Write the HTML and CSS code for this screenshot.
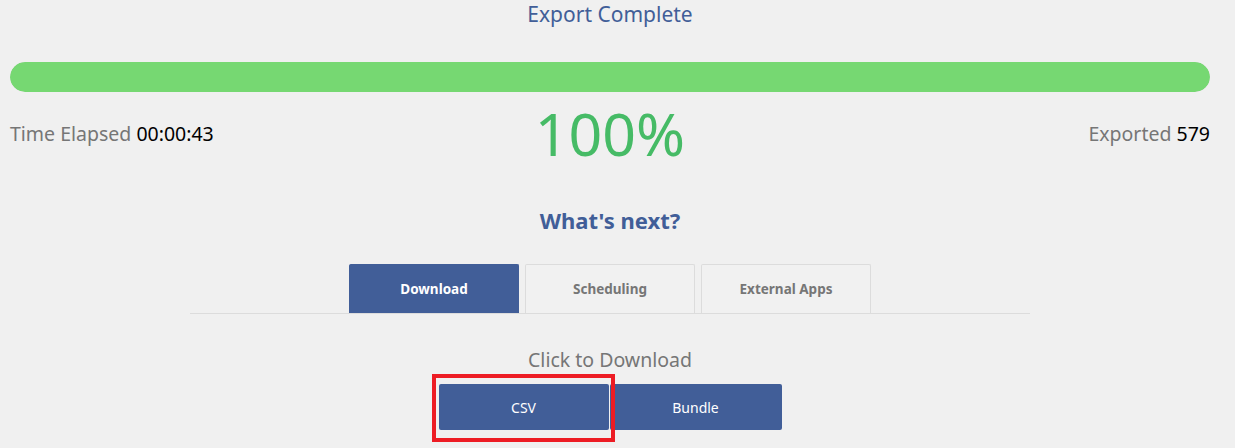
FILE: index.html
```html
<!DOCTYPE html>
<html lang="en">
<head>
  <meta charset="UTF-8" />
  <title>Export Complete</title>
  <link rel="stylesheet" href="styles.css">
</head>
<body>
  <div class="export">
    <h3 class="export-title">Export Complete</h3>
    <div class="progress"><div class="progress-fill" style="width:100%"></div></div>
    <div class="stats">
      <div class="stat"><span class="stat-label">Time Elapsed</span> <span class="stat-value">00:00:43</span></div>
      <div class="percent">100%</div>
      <div class="stat stat-right"><span class="stat-label">Exported</span> <span class="stat-value">579</span></div>
    </div>

    <h2 class="next-title">What's next?</h2>
    <div class="tabs">
      <button class="tab active">Download</button>
      <button class="tab">Scheduling</button>
      <button class="tab">External Apps</button>
    </div>

    <div class="download">
      <div class="download-title">Click to Download</div>
      <div class="download-buttons">
        <div class="highlight"><button class="dl-btn csv">CSV</button></div>
        <button class="dl-btn">Bundle</button>
      </div>
    </div>
  </div>
</body>
</html>
```

FILE: styles.css
```css
*, *::before, *::after { box-sizing: border-box; }
html, body { min-height: 100%; }
body {
  margin: 0;
  background: #f0f0f0;
  font-family: "Noto Sans", "Open Sans", sans-serif;
  color: #333;
}
.export {
  width: 1200px;
  margin-left: 10px;
  padding-bottom: 40px;
}
.export-title {
  margin: 0;
  height: 62px;
  text-align: center;
  font-size: 21px;
  font-weight: 400;
  color: #415e98;
  line-height: 28px;
}

/* progress */
.progress {
  height: 30px;
  border-radius: 15px;
  background: #e0e0e0;
  overflow: hidden;
}
.progress-fill {
  height: 100%;
  background: #76d872;
  border-radius: 15px;
}
.stats {
  display: flex;
  align-items: center;
  justify-content: space-between;
  height: 82px;
}
.stat {
  flex: 1;
  font-size: 19.5px;
}
.stat-right { text-align: right; }
.stat-label { color: #767676; }
.stat-value { color: #000; }
.percent {
  font-size: 59px;
  color: #46bb66;
  line-height: 1;
}

/* what's next */
.next-title {
  margin: 31px 0 0;
  text-align: center;
  font-size: 22px;
  font-weight: 700;
  color: #415e98;
  line-height: 30px;
}
.tabs {
  display: flex;
  justify-content: center;
  gap: 6px;
  width: 840px;
  margin: 29px auto 0;
  border-bottom: 1px solid #dcdcdc;
}
.tab {
  width: 170px;
  height: 49px;
  border: 1px solid #dcdcdc;
  border-bottom: none;
  border-radius: 2px 2px 0 0;
  background: #f1f1f1;
  color: #767676;
  font-family: inherit;
  font-size: 13.5px;
  font-weight: 700;
}
.tab.active {
  background: #415e98;
  border-color: #415e98;
  color: #fff;
}

/* download */
.download { text-align: center; }
.download-title {
  margin-top: 33px;
  font-size: 19.5px;
  color: #767676;
  line-height: 26px;
}
.download-buttons {
  display: flex;
  justify-content: center;
  gap: 1px;
  margin-top: 11px;
}
.dl-btn {
  width: 172px;
  height: 46px;
  border: none;
  border-radius: 2px;
  background: #415e98;
  color: #fff;
  font-family: inherit;
  font-size: 14px;
}
.highlight {
  position: relative;
  z-index: 1;
  display: flex;
}
.dl-btn.csv { width: 170px; }
.highlight::after {
  content: '';
  position: absolute;
  left: -7px; right: -6px; top: -10px; bottom: -12px;
  border: 4px solid #ed1c24;
  pointer-events: none;
}
```
